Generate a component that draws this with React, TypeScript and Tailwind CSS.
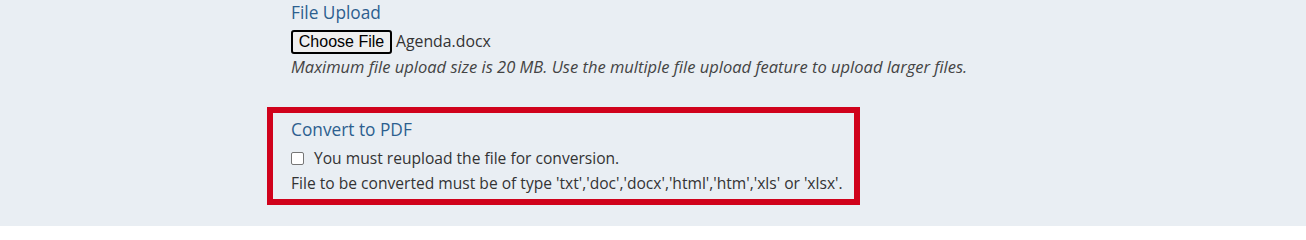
import React from "react";

export default function App() {
  return (
    <div className="min-h-[226px] w-full bg-[#e9eef3] text-[#333333]" style={{ fontFamily: "'Open Sans', sans-serif" }}>
      <div className="ml-[267px] w-[593px] whitespace-nowrap">
        <div className="px-6">
          <div className="pt-[1px] text-[17.3px] leading-[24px] text-[#2d5f8f]">File Upload</div>
          <div className="mt-[5px] flex h-6 items-center">
            <span
              className="flex h-6 w-[101px] items-center justify-center rounded-[3px] border-2 border-black bg-[#efefef] text-[16px] text-black"
              style={{ fontFamily: "'Liberation Sans', Arial, sans-serif" }}
            >
              Choose File
            </span>
            <span className="ml-1 text-[15.8px] text-[#333333]">Agenda.docx</span>
          </div>
          <div className="mt-[2px] text-[16.5px] italic leading-[22px] text-[#444444]">
            Maximum file upload size is 20 MB. Use the multiple file upload feature to upload larger files.
          </div>
        </div>
        <div className="mt-[29px] h-[98px] border-[6px] border-[#d0021b] px-[18px]">
          <div className="pt-[5px] text-[17.3px] leading-[24px] text-[#2d5f8f]">Convert to PDF</div>
          <div className="mt-[6px] flex h-5 items-center">
            <span className="block h-[13px] w-[13px] rounded-[2px] border border-[#767676] bg-white" />
            <span className="ml-[10px] text-[15.6px] leading-5">You must reupload the file for conversion.</span>
          </div>
          <div className="mt-[4px] text-[15.6px] leading-[22px]">
            File to be converted must be of type 'txt','doc','docx','html','htm','xls' or 'xlsx'.
          </div>
        </div>
      </div>
    </div>
  );
}
